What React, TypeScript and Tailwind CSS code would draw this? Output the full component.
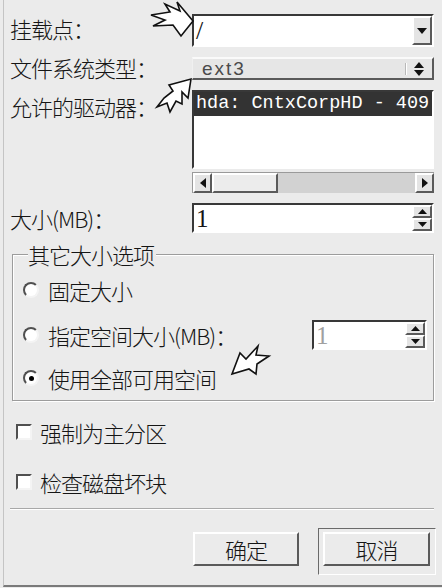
import React from "react";

const raised =
  "border-2 border-t-white border-l-white border-r-[#5a5a5a] border-b-[#5a5a5a] bg-[#e4e4e4]";
const sunken =
  "border-2 border-t-[#383838] border-l-[#383838] border-r-white border-b-white";
const cjk = "text-[22px] tracking-[-1px] leading-none";

function Tri({ dir, size = 9, color = "#111" }: { dir: "up" | "down" | "left" | "right"; size?: number; color?: string }) {
  const h = Math.round(size * 0.6);
  if (dir === "up" || dir === "down") {
    const pts = dir === "down" ? `0,0 ${size},0 ${size / 2},${h}` : `0,${h} ${size},${h} ${size / 2},0`;
    return (
      <svg width={size} height={h} viewBox={`0 0 ${size} ${h}`}>
        <polygon points={pts} fill={color} />
      </svg>
    );
  }
  const pts = dir === "right" ? `0,0 ${h},${size / 2} 0,${size}` : `${h},0 0,${size / 2} ${h},${size}`;
  return (
    <svg width={h} height={size} viewBox={`0 0 ${h} ${size}`}>
      <polygon points={pts} fill={color} />
    </svg>
  );
}

function SpinButtons() {
  return (
    <div className="w-[20px] shrink-0 flex flex-col">
      <div className={`flex-1 flex items-center justify-center ${raised}`}>
        <Tri dir="up" size={9} />
      </div>
      <div className={`flex-1 flex items-center justify-center ${raised}`}>
        <Tri dir="down" size={9} />
      </div>
    </div>
  );
}

function Radio({ checked }: { checked?: boolean }) {
  return (
    <div className="w-[16px] h-[16px] shrink-0 rounded-full border-2 border-t-[#505050] border-l-[#505050] border-r-[#f4f4f4] border-b-[#f4f4f4] bg-white flex items-center justify-center">
      {checked && <div className="w-[5px] h-[5px] rounded-full bg-black" />}
    </div>
  );
}

function Check() {
  return (
    <div className="w-[16px] h-[16px] shrink-0 border-2 border-t-[#505050] border-l-[#505050] border-r-[#f4f4f4] border-b-[#f4f4f4] bg-white" />
  );
}

export default function App() {
  return (
    <div className="w-[442px] h-[588px] bg-[#ebebeb] relative overflow-hidden font-['Noto_Sans_CJK_SC',sans-serif] font-light text-[#151515]">
      <div className="ml-[3px] h-[587px] border-l border-l-[#c4c4c4] border-b-2 border-b-[#7a7a7a] pl-[6px] pr-[8px] pt-[14px] flex flex-col">
        {/* Row 1: mount point */}
        <div className="flex h-[33px]">
          <div className={`w-[182px] shrink-0 flex items-center ${cjk} -mt-[6px]`}>挂载点：</div>
          <div className={`flex-1 min-w-0 flex ${sunken} bg-white`}>
            <div className="flex-1 pl-[2px] text-[26px] font-['Liberation_Serif',serif] leading-none flex items-center">/</div>
            <div className={`w-[20px] shrink-0 flex items-center justify-center ${raised}`}>
              <Tri dir="down" size={10} />
            </div>
          </div>
        </div>

        {/* Row 2: fs type */}
        <div className="flex h-[23px] mt-[10px]">
          <div className={`w-[182px] shrink-0 flex items-center ${cjk} -mt-[3px]`}>文件系统类型：</div>
          <div className="flex-1 min-w-0 flex items-center border-t-2 border-t-[#fafafa] border-l border-l-[#f0f0f0] border-b-2 border-b-[#5a5a5a] border-r-2 border-r-[#5a5a5a] bg-[#e6e6e6]">
            <div className="flex-1 pl-[9px] text-[19px] tracking-[2px] leading-none text-[#4a4a4a] font-['Liberation_Sans',sans-serif]">ext3</div>
            <div className="w-[2px] h-[12px] border-l border-l-[#b8b8b8] border-r border-r-white mr-[7px]" />
            <div className="flex flex-col items-center gap-[2px] mr-[8px]">
              <Tri dir="up" size={10} />
              <Tri dir="down" size={10} />
            </div>
          </div>
        </div>

        {/* Row 3: drives */}
        <div className="flex h-[103px] mt-[10px]">
          <div className={`w-[182px] shrink-0 ${cjk} pt-[5px] whitespace-nowrap`}>允许的驱动器：</div>
          <div className="flex-1 min-w-0 flex flex-col">
            <div className={`h-[79px] bg-white ${sunken} overflow-hidden`}>
              <div className="h-[24px] bg-[#333] text-white whitespace-nowrap font-['Liberation_Mono',monospace] font-normal text-[18.5px] leading-[24px] pl-[2px]">
                hda: CntxCorpHD - 409
              </div>
            </div>
            <div className="h-[21px] mt-[3px] flex bg-[#d2d2d2] border-t border-t-[#9a9a9a] border-l border-l-[#9a9a9a]">
              <div className={`w-[19px] shrink-0 flex items-center justify-center ${raised}`}>
                <Tri dir="left" size={10} />
              </div>
              <div className={`w-[66px] shrink-0 ${raised} bg-[#ececec]`} />
              <div className="flex-1" />
              <div className={`w-[19px] shrink-0 flex items-center justify-center ${raised}`}>
                <Tri dir="right" size={10} />
              </div>
            </div>
          </div>
        </div>

        {/* Row 4: size */}
        <div className="flex h-[30px] mt-[10px]">
          <div className={`w-[182px] shrink-0 flex items-center ${cjk}`}>大小(MB)：</div>
          <div className={`flex-1 min-w-0 flex ${sunken} bg-white`}>
            <div className="flex-1 pl-[2px] text-[25px] font-['Liberation_Serif',serif] leading-none flex items-center">1</div>
            <SpinButtons />
          </div>
        </div>

        {/* Group */}
        <fieldset className="mt-[9px] ml-[2px] border border-[#9c9c9c] shadow-[inset_1px_1px_0_#ffffff,1px_1px_0_#ffffff] pt-[9px] pb-[7px] pl-[10px] pr-[6px]">
          <legend className="ml-[5px] text-[22px] tracking-[-1px] leading-[24px] bg-[#ebebeb] pr-[2px]">其它大小选项</legend>
          <div className="flex items-center h-[30px]">
            <Radio />
            <span className={`ml-[9px] ${cjk}`}>固定大小</span>
          </div>
          <div className="flex items-center h-[30px] mt-[15px]">
            <Radio />
            <span className={`ml-[9px] ${cjk}`}>指定空间大小(MB)：</span>
            <div className={`ml-auto w-[115px] h-[30px] flex ${sunken} bg-white`}>
              <div className="flex-1 pl-[2px] text-[25px] font-['Liberation_Serif',serif] leading-none flex items-center text-[#a0a0a0]">1</div>
              <SpinButtons />
            </div>
          </div>
          <div className="flex items-center h-[30px] mt-[13px]">
            <Radio checked />
            <span className={`ml-[9px] ${cjk}`}>使用全部可用空间</span>
          </div>
        </fieldset>

        {/* Checkboxes */}
        <div className="flex items-center h-[30px] mt-[16px] pl-[6px]">
          <Check />
          <span className={`ml-[8px] ${cjk}`}>强制为主分区</span>
        </div>
        <div className="flex items-center h-[30px] mt-[20px] pl-[6px]">
          <Check />
          <span className={`ml-[8px] ${cjk}`}>检查磁盘坏块</span>
        </div>

        {/* Separator */}
        <div className="mt-[11px] border-t border-t-[#a8a8a8] border-b border-b-white" />

        {/* Buttons */}
        <div className="mt-[18px] flex justify-end items-start">
          <button className={`mt-[4px] w-[106px] h-[34px] ${raised} bg-[#ebebeb] ${cjk} flex items-center justify-center`}>
            确定
          </button>
          <div className="ml-[19px] -mr-[2px] border border-t-[#6a6a6a] border-l-[#6a6a6a] border-r-white border-b-white pt-[3px] pl-[4px] pr-[5px] pb-[8px]">
            <button className={`w-[107px] h-[34px] ${raised} bg-[#ebebeb] ${cjk} flex items-center justify-center`}>
              取消
            </button>
          </div>
        </div>
      </div>

      {/* Callout arrows */}
      <svg className="absolute left-0 top-0 pointer-events-none" width={442} height={588} viewBox="0 0 442 588">
        <g fill="#fff" stroke="#111" strokeWidth={1.6} strokeLinejoin="miter">
          <polygon points="193,21 177,2 180,11 165,4 170,12 151,15 165,20 153,26 173,25 181,36" />
          <polygon points="191,79 188,98 182,92 182,104 176,101 170,112 167,103 157,107 164,98 173,91 169,85" />
          <polygon points="232,374 240,353 246,359 258,346 256,355 269,356 257,364 256,374 249,369" />
        </g>
      </svg>
    </div>
  );
}
